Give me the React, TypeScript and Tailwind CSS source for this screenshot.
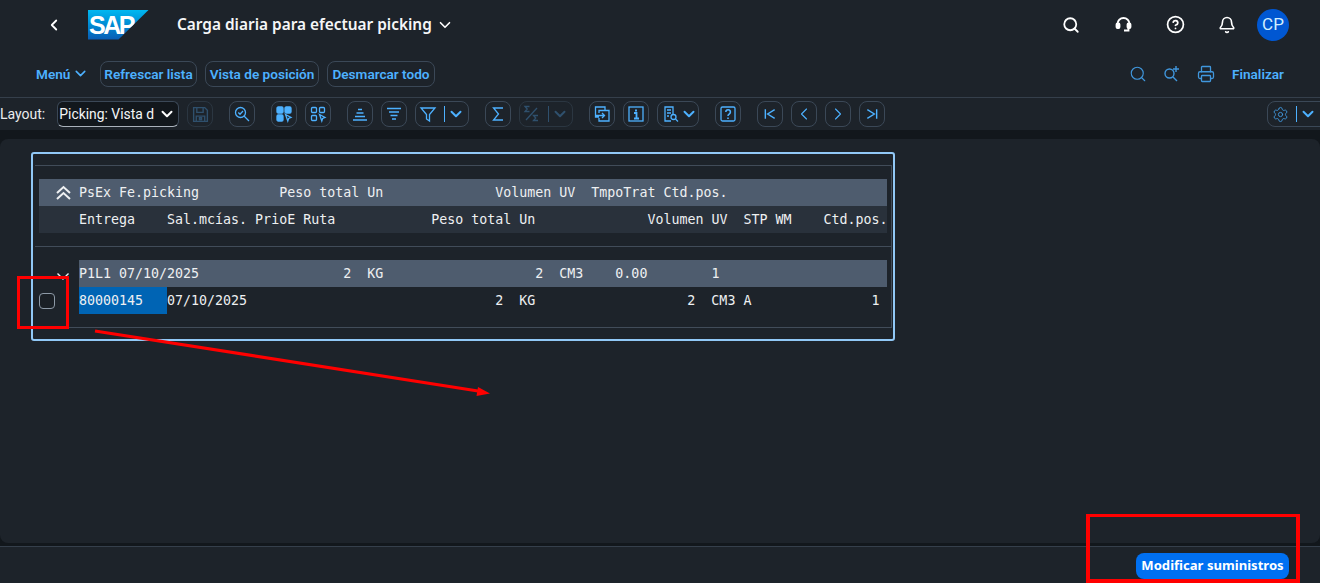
import type { ReactNode } from "react";
import { Bell, ChevronDown, ChevronLeft, ChevronRight, CircleHelp, Printer, Search, Settings } from "lucide-react";
import { clsx } from "clsx";

const uiFont = "font-['Roboto',sans-serif]";

function ToolButton({ children, className, disabled }: { children: ReactNode; className?: string; disabled?: boolean }) {
  return (
    <div
      className={clsx(
        "flex h-[26px] shrink-0 items-center rounded-lg border",
        disabled ? "border-[#2b3641] text-[#2f506d]" : "border-[#3b4857] text-[#4db1ff]",
        className ?? "w-[26px] justify-center",
      )}
    >
      {children}
    </div>
  );
}

function Divider({ disabled }: { disabled?: boolean }) {
  return <span className={clsx("ml-[7px] h-4 w-px shrink-0", disabled ? "bg-[#2f506d]" : "bg-[#4db1ff]")} />;
}

function Caret({ className }: { className?: string }) {
  return <ChevronDown className={clsx("mx-[2px] size-[18px] shrink-0", className)} strokeWidth={2.6} />;
}

function Ico({ children, size = 18 }: { children: ReactNode; size?: number }) {
  return (
    <svg className="shrink-0" width={size} height={size} viewBox="0 0 18 18" fill="none" stroke="currentColor" strokeWidth="1.3">
      {children}
    </svg>
  );
}

function Cursor() {
  return <path d="M10.500 9.500 16 12.500 13.600 13.500 12.800 16Z" fill="#1d232a" />;
}

function LinkButton({ children, className }: { children: ReactNode; className: string }) {
  return (
    <div className={clsx("flex h-[26px] items-center justify-center rounded-lg border border-[#3b4857] text-[13.6px] font-semibold text-[#4db1ff]", className)}>
      {children}
    </div>
  );
}

function ShellIcon({ children }: { children: ReactNode }) {
  return <div className="flex w-[52px] justify-center">{children}</div>;
}

function ActionIcon({ children }: { children: ReactNode }) {
  return <div className="flex w-[34px] justify-center">{children}</div>;
}

function MonoRow({ text, className }: { text: string; className?: string }) {
  return <div className={clsx("h-[27px] whitespace-pre leading-[27px]", className)}>{text}</div>;
}

export default function App() {
  return (
    <div className={clsx("relative flex h-[583px] w-[1320px] flex-col overflow-hidden bg-[#1d232a] text-white", uiFont)}>
      {/* shell bar */}
      <header className="flex h-[49px] shrink-0 items-center pl-[45px] pr-[31px]">
        <ChevronLeft className="size-[18px]" strokeWidth={2.4} />
        <div className="relative ml-[25px] h-[30px] w-[61px] bg-gradient-to-b from-[#00b8f1] to-[#0a5cb4] [clip-path:polygon(0_0,100%_0,50%_100%,0_100%)]">
          <span className="absolute left-[1px] top-0 font-['Liberation_Sans',sans-serif] text-[25px] font-bold leading-[30px] tracking-[-2.5px] text-white">
            SAP
          </span>
        </div>
        <h1 className="ml-[28px] font-['Noto_Sans',sans-serif] text-[15.4px] font-semibold text-[#f5f6f7]">Carga diaria para efectuar picking</h1>
        <ChevronDown className="ml-[4px] size-[18px]" strokeWidth={2.2} />
        <div className="ml-auto flex items-center">
          <ShellIcon>
            <Search className="size-[18px]" strokeWidth={2.4} />
          </ShellIcon>
          <ShellIcon>
            <svg width="17" height="17" viewBox="0 0 17 17" fill="none" stroke="currentColor" strokeWidth="1.8">
              <path d="M2.500 11V8a6 6 0 0 1 12 0v3" />
              <rect x="1.500" y="7.500" width="3" height="4.500" rx="1" fill="currentColor" />
              <rect x="12.500" y="7.500" width="3" height="4.500" rx="1" fill="currentColor" />
              <path d="M13.500 12v2.500H9" />
            </svg>
          </ShellIcon>
          <ShellIcon>
            <CircleHelp className="size-[19px]" strokeWidth={2.2} />
          </ShellIcon>
          <ShellIcon>
            <Bell className="size-[18px]" strokeWidth={2.2} />
          </ShellIcon>
          <div className="ml-[4px] flex size-8 items-center justify-center rounded-full bg-[#0057d2] text-[17px] text-[#d1efff]">CP</div>
        </div>
      </header>

      {/* page actions */}
      <div className="flex h-[49px] shrink-0 items-center border-b border-[#353f4b] pl-[36px] pr-[36px] pt-[2px]">
        <div className="flex w-[64px] items-center">
          <span className="text-[13.6px] font-semibold text-[#4db1ff]">Menú</span>
          <ChevronDown className="ml-[2px] size-[17px] text-[#4db1ff]" strokeWidth={2.2} />
        </div>
        <div className="flex gap-2">
          <LinkButton className="w-[97px]">Refrescar lista</LinkButton>
          <LinkButton className="w-[114px]">Vista de posición</LinkButton>
          <LinkButton className="w-[108px]">Desmarcar todo</LinkButton>
        </div>
        <div className="ml-auto flex items-center text-[#4097dd]">
          <ActionIcon>
            <Search className="size-[18px]" strokeWidth={1.5} />
          </ActionIcon>
          <ActionIcon>
            <svg width="17" height="17" viewBox="0 0 17 17" fill="none" stroke="currentColor" strokeWidth="1.400">
              <circle cx="6.500" cy="8.500" r="4.500" />
              <path d="m10 12 4 4M13 1v6M10 4h6" />
            </svg>
          </ActionIcon>
          <ActionIcon>
            <Printer className="size-[18px]" strokeWidth={1.7} />
          </ActionIcon>
          <span className="ml-[9px] text-[13.6px] font-semibold text-[#4db1ff]">Finalizar</span>
        </div>
      </div>

      {/* layout toolbar */}
      <div className="flex h-[32px] shrink-0 items-center">
        <span className="text-[14px] text-[#eaecee]">Layout:</span>
        <div className="ml-[12px] flex h-[26px] w-[122px] items-center justify-between rounded-md border border-[#3b4857] border-b-[#aab2bb] bg-[#12171c] pl-[1px] text-[13.9px] text-[#f5f6f7]">
          <span>Picking: Vista d</span>
          <Caret className="text-white" />
        </div>
        <div className="ml-2 flex items-center gap-4">
          <ToolButton disabled>
            <Ico size={19}>
              <path d="M2.500 2.500h10.500l2.500 2.500v10.500h-13Z" />
              <path d="M5.500 2.500v4.500h6V2.500M5 15.500v-5h8v5" />
              <rect x="8" y="12" width="2" height="2" />
            </Ico>
          </ToolButton>
          <ToolButton>
            <Ico>
              <circle cx="7.500" cy="7.500" r="5" />
              <path d="m5.300 7.500 1.700 1.700 3-3.200M11 11l5 5" />
            </Ico>
          </ToolButton>
          <div className="flex gap-2">
            <ToolButton>
              <Ico>
                <rect x="2" y="2" width="6" height="6" rx="1.200" fill="currentColor" />
                <rect x="10" y="2" width="6" height="6" rx="1.200" fill="currentColor" />
                <rect x="2" y="10" width="6" height="6" rx="1.200" fill="currentColor" />
                <Cursor />
              </Ico>
            </ToolButton>
            <ToolButton>
              <Ico>
                <rect x="2.500" y="2.500" width="5" height="5" rx="1" />
                <rect x="10.500" y="2.500" width="5" height="5" rx="1" />
                <rect x="2.500" y="10.500" width="5" height="5" rx="1" />
                <Cursor />
              </Ico>
            </ToolButton>
          </div>
          <div className="flex gap-2">
            <ToolButton>
              <Ico>
                <path d="M7 4.500h4M5.500 8h7M4 11.500h10M2 15h14" strokeWidth="1.500" />
              </Ico>
            </ToolButton>
            <ToolButton>
              <Ico>
                <path d="M2 3.500h14M4 7h10M5.500 10.500h7M7 14h4" strokeWidth="1.500" />
              </Ico>
            </ToolButton>
            <ToolButton className="w-[54px] pl-[3px]">
              <Ico>
                <path d="M2 3h14l-5.500 6.500V16l-3-2V9.500Z" />
              </Ico>
              <Divider />
              <Caret />
            </ToolButton>
          </div>
          <div className="flex gap-2">
            <ToolButton>
              <Ico>
                <path d="M14 3H4.500l5 6-5 6H14" />
              </Ico>
            </ToolButton>
            <ToolButton disabled className="w-[54px] pl-[3px]">
              <Ico>
                <path d="M6.500 1.500H2l2.200 2.500L2 6.500h4.500M15 10.500h-4.500l2.200 2.500-2.200 2.500H15M3 15 14 3" />
              </Ico>
              <Divider disabled />
              <Caret />
            </ToolButton>
          </div>
          <div className="flex gap-2">
            <ToolButton>
              <Ico>
                <path d="M12 5V2H2.500v10H6M6 8V5.500h10V16H6v-3M3 10.500h8.500M9 8l2.500 2.500L9 13" />
              </Ico>
            </ToolButton>
            <ToolButton>
              <Ico>
                <rect x="2" y="2" width="14" height="14" />
                <path d="M9 4.500v2" strokeWidth="2" />
                <path d="M7 8h2.500v5M7 13.500h5" strokeWidth="1.800" />
              </Ico>
            </ToolButton>
            <ToolButton className="w-[42px] pl-[4px]">
              <Ico>
                <path d="M11 10V2H3v14h6M5 5h4M5 8h4M5 11h2" />
                <circle cx="11.500" cy="12" r="2.500" />
                <path d="m13.500 14 2.500 2.500" />
              </Ico>
              <Caret className="!ml-0" />
            </ToolButton>
          </div>
          <ToolButton>
            <Ico>
              <rect x="2" y="2" width="14" height="14" rx="1.500" />
              <path d="M6.800 7a2.300 2.300 0 1 1 3.500 2c-.9.500-1.300 1-1.300 2" strokeWidth="1.600" />
              <path d="M9 12.500v1.500" strokeWidth="1.600" />
            </Ico>
          </ToolButton>
          <div className="flex gap-2">
            <ToolButton>
              <Ico size={14}>
                <path d="M3 3v12M15 3.500 6 9l9 5.500" strokeWidth="1.800" />
              </Ico>
            </ToolButton>
            <ToolButton>
              <ChevronLeft className="size-[20px]" strokeWidth={1.3} />
            </ToolButton>
            <ToolButton>
              <ChevronRight className="size-[20px]" strokeWidth={1.3} />
            </ToolButton>
            <ToolButton>
              <Ico size={14}>
                <path d="M15 3v12M3 3.500 12 9l-9 5.500" strokeWidth="1.800" />
              </Ico>
            </ToolButton>
          </div>
        </div>
        <ToolButton className="ml-auto mr-[-2px] w-[55px] rounded-r-none pl-[4px]">
          <Settings className="size-[17px] shrink-0 text-[#4097dd]" strokeWidth={1.3} />
          <Divider />
          <Caret />
        </ToolButton>
      </div>

      {/* working area */}
      <main className="flex-1 bg-[#12171c] pb-[3px] pt-[9px]">
        <div className="h-full rounded-lg bg-[#1d232a] pl-[31px] pt-[13px]">
          <div className="h-[189px] w-[864px] rounded-[3px] border-2 border-[#91c8f6] pl-[2px] pr-[1px] pt-[11px] font-['DejaVu_Sans_Mono',monospace] text-[13.3px] text-[#eef0f2]">
            <div className="h-[81px] border-r border-t border-[#414c59] pl-[4px] pr-[4px] pt-[13px]">
              <div className="flex h-[27px] bg-[#4e5c6e]">
                <div className="flex w-[40px] shrink-0 items-center justify-end pr-[8px]">
                  <svg width="15" height="15" viewBox="0 0 15 15" fill="none" stroke="currentColor" strokeWidth="2">
                    <path d="M1 8 7.500 2 14 8M1 14l6.500-6L14 14" />
                  </svg>
                </div>
                <MonoRow text="PsEx Fe.picking          Peso total Un              Volumen UV  TmpoTrat Ctd.pos." />
              </div>
              <div className="flex h-[27px] overflow-hidden bg-[#29313b] pl-[40px]">
                <MonoRow text="Entrega    Sal.mcías. PrioE Ruta            Peso total Un              Volumen UV  STP WM    Ctd.pos." />
              </div>
            </div>
            <div className="h-[82px] border-b border-r border-t border-[#414c59] pl-[4px] pr-[4px] pt-[13px]">
              <div className="flex h-[27px]">
                <div className="flex w-[40px] shrink-0 items-start justify-end pr-[10px] pt-[13px]">
                  <svg width="12" height="7" viewBox="0 0 12 7" fill="none" stroke="currentColor" strokeWidth="1.400">
                    <path d="M.5.500 6 6 11.500.5" />
                  </svg>
                </div>
                <MonoRow className="flex-1 bg-[#4e5c6e]" text="P1L1 07/10/2025                  2  KG                   2  CM3    0.00        1" />
              </div>
              <div className="flex h-[27px]">
                <div className="flex w-[40px] shrink-0 items-center">
                  <span className="size-4 rounded-[4px] border border-[#8d99a6] bg-[#1a1f25]" />
                </div>
                <span className="h-[27px] w-[88px] bg-[#0064b4] leading-[27px]">80000145</span>
                <MonoRow text="07/10/2025                               2  KG                   2  CM3 A               1" />
              </div>
            </div>
          </div>
        </div>
      </main>

      {/* footer */}
      <footer className="flex h-[37px] shrink-0 items-center justify-end border-t border-[#353f4b] pr-[31px] pt-[2px]">
        <div className="flex h-[26px] w-[153px] items-center justify-center rounded-lg bg-[#0070f2] font-['Noto_Sans',sans-serif] text-[13.1px] font-bold">
          Modificar suministros
        </div>
      </footer>

      {/* red annotations drawn over the screenshot */}
      <div className="pointer-events-none absolute left-[17px] top-[276px] h-[53px] w-[52px] border-[3px] border-[#ff0000]" />
      <div className="pointer-events-none absolute left-[1086px] top-[514px] h-[69px] w-[214px] border-[4px] border-t-[3px] border-[#ff0000]" />
      <svg className="pointer-events-none absolute left-0 top-0" width="1320" height="583" fill="none">
        <path d="M95 331 478 391" stroke="#ff0000" strokeWidth="3.200" />
        <path d="M490 393.500 476.500 396 478 387Z" fill="#ff0000" />
      </svg>
    </div>
  );
}
